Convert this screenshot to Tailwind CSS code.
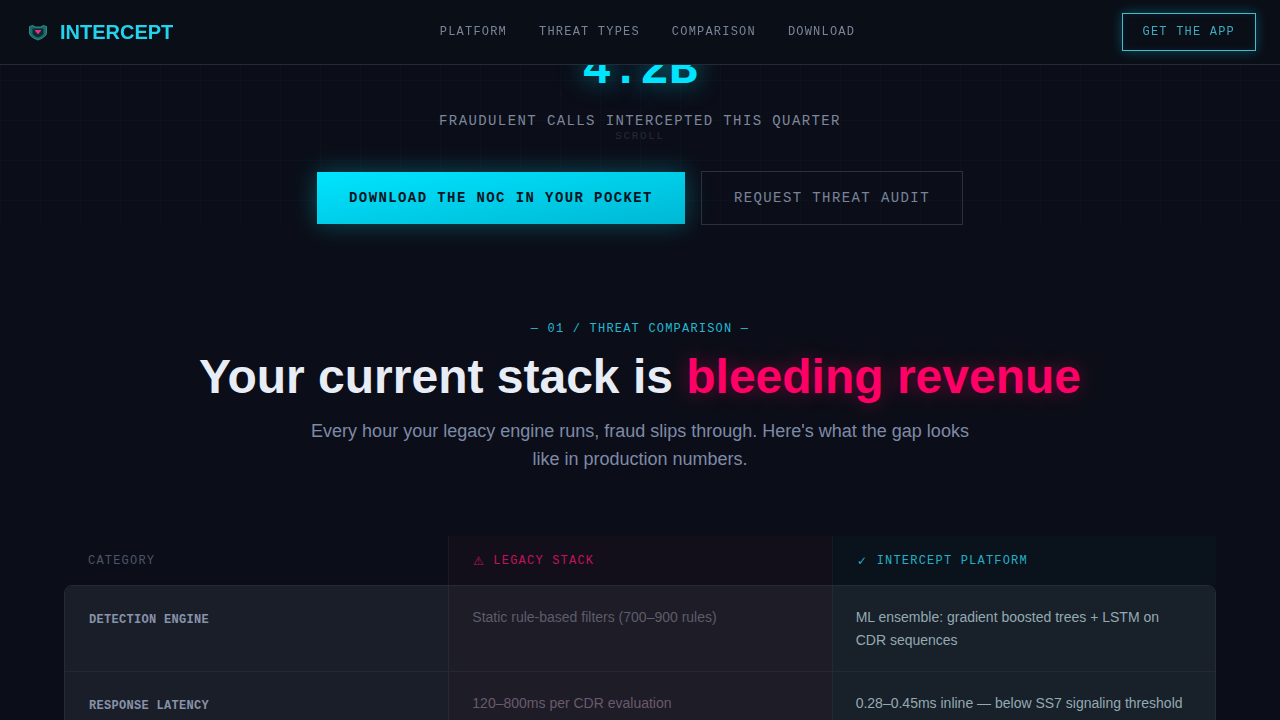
<!DOCTYPE html>
<html lang="en">
<head>
    <meta charset="UTF-8">
    <meta name="viewport" content="width=device-width, initial-scale=1.0">
    <title>Intercept</title>
    <script src="https://cdn.jsdelivr.net/npm/@tailwindcss/browser@4"></script>
</head>
<body class="h-screen overflow-hidden bg-[#0b0e18] text-[#e8edf5] font-['Liberation_Sans',sans-serif]">

    <!-- Nav -->
    <nav class="fixed top-0 inset-x-0 z-10 h-[65px] flex items-center justify-between pl-[28px] pr-[24px] bg-[#0a0e17] border-b border-[#232a3a]">
        <a class="flex items-center gap-[12px]">
            <svg width="20" height="20" viewBox="0 0 20 20" fill="none">
                <path d="M1.500 4.500 L5 3.500 L7 5 H13 L15 3.500 L18.500 4.500 V11 C18.500 14 14 16.500 10 18 C6 16.500 1.500 14 1.500 11 Z" fill="#1d6b68" stroke="#2a8a84" stroke-width="1"/>
                <path d="M4.500 6.500 H15.500 V11 C15.500 13 12.500 14.500 10 15.500 C7.500 14.500 4.500 13 4.500 11 Z" fill="#0c2a2f"/>
                <path d="M6.500 8 H13.500 L10 12.500 Z" fill="#e0338a"/>
            </svg>
            <span class="text-[20px] font-bold leading-[28px] text-[#22d3ee]">INTERCEPT</span>
        </a>
        <div class="flex gap-[32px] font-['Liberation_Mono',monospace] text-[12px] tracking-[1.2px] text-[#7a8499]">
            <a>PLATFORM</a>
            <a>THREAT TYPES</a>
            <a>COMPARISON</a>
            <a>DOWNLOAD</a>
        </div>
        <button class="px-[20px] py-[10px] border border-[#46b8cf] font-['Liberation_Mono',monospace] text-[12px] leading-[16px] tracking-[1.2px] text-[#3fa9c0] shadow-[0_0_12px_rgba(0,229,255,0.3),inset_0_0_8px_rgba(0,229,255,0.08)]">GET THE APP</button>
    </nav>

    <!-- Hero -->
    <section class="relative h-[224px] pt-[46px] flex flex-col items-center font-['Liberation_Mono',monospace]">
        <div class="absolute inset-0 bg-[linear-gradient(rgba(0,229,255,0.02)_1px,transparent_1px),linear-gradient(90deg,rgba(0,229,255,0.02)_1px,transparent_1px)] bg-[size:40px_40px]"></div>
        <div class="relative text-[48px] leading-[48px] font-bold text-[#00e5ff] [text-shadow:0_0_24px_rgba(0,229,255,0.5)]">4.2B</div>
        <div class="relative mt-[17px] text-[14px] leading-[20px] tracking-[1.4px] text-[#7f879c]">FRAUDULENT CALLS INTERCEPTED THIS QUARTER</div>
        <div class="absolute left-0 right-0 top-[129px] text-center text-[11px] leading-[14px] tracking-[1.65px] text-[#262b39]">SCROLL</div>
        <div class="relative mt-[40px] flex items-center gap-[16px] text-[14px] leading-[20px] tracking-[1.4px]">
            <button class="px-[32px] py-[16px] font-bold text-[#0a1422] bg-linear-to-br from-[#00e5ff] to-[#00b8d4] shadow-[0_0_24px_rgba(0,229,255,0.3)]">DOWNLOAD THE NOC IN YOUR POCKET</button>
            <button class="px-[32px] py-[16px] border border-[#2a3142] text-[#7a8499]">REQUEST THREAT AUDIT</button>
        </div>
    </section>

    <!-- Comparison -->
    <section class="px-[64px] pt-[97px]">
        <div class="text-center">
            <div class="font-['Liberation_Mono',monospace] text-[12px] leading-[16px] tracking-[1.2px] text-[#22b8d4]">— 01 / THREAT COMPARISON —</div>
            <h2 class="mt-[11px] text-[48px] leading-[58px] font-bold">Your current stack is <span class="text-[#ff0066] [text-shadow:0_0_20px_rgba(255,0,102,0.4)]">bleeding revenue</span></h2>
            <p class="mt-[11px] mx-auto max-w-[680px] text-[18px] leading-[28px] text-[#7f8aa6]">Every hour your legacy engine runs, fraud slips through. Here's what the gap looks like in production numbers.</p>
        </div>

        <div class="mt-[63px]">
            <div class="grid grid-cols-3 h-[49px] font-['Liberation_Mono',monospace] text-[12px] tracking-[1.2px]">
                <div class="flex items-center px-[24px] text-[#4d5566]">CATEGORY</div>
                <div class="flex items-center px-[24px] bg-[#120f1a] border-l border-[#161b26] text-[#c4125f] whitespace-pre"><span class="font-['DejaVu_Sans',sans-serif]">⚠</span> LEGACY STACK</div>
                <div class="flex items-center px-[24px] bg-[#0a131b] border-l border-[#121b26] text-[#22b0c8] whitespace-pre"><span class="font-['DejaVu_Sans',sans-serif]">✓</span> INTERCEPT PLATFORM</div>
            </div>
            <div class="rounded-lg border border-[#252b39] overflow-hidden text-[14px] leading-[23px]">
                <div class="grid grid-cols-3 border-b border-[#232833]">
                    <div class="px-[24px] pt-[20px] pb-[19px] bg-[#1a1e28]">
                        <div class="mt-[3px] font-['Liberation_Mono',monospace] text-[12px] font-bold tracking-[0.3px] text-[#8892a8]">DETECTION ENGINE</div>
                    </div>
                    <div class="px-[24px] pt-[20px] pb-[19px] bg-[#1e1c26] shadow-[inset_1px_0_0_#232a35] text-[#5d5d6c]">Static rule-based filters (700–900 rules)</div>
                    <div class="px-[24px] pt-[20px] pb-[19px] bg-[#18202a] shadow-[inset_1px_0_0_#212a36] text-[#94aab2]">ML ensemble: gradient boosted trees + LSTM on CDR sequences</div>
                </div>
                <div class="grid grid-cols-3">
                    <div class="px-[24px] pt-[20px] pb-[19px] bg-[#1a1e28]">
                        <div class="mt-[3px] font-['Liberation_Mono',monospace] text-[12px] font-bold tracking-[0.3px] text-[#8892a8]">RESPONSE LATENCY</div>
                    </div>
                    <div class="px-[24px] pt-[20px] pb-[19px] bg-[#1e1c26] shadow-[inset_1px_0_0_#232a35] text-[#6a5a6e]">120–800ms per CDR evaluation</div>
                    <div class="px-[24px] pt-[20px] pb-[19px] bg-[#18202a] shadow-[inset_1px_0_0_#212a36] text-[#94aab2]">0.28–0.45ms inline — below SS7 signaling threshold</div>
                </div>
            </div>
        </div>
    </section>
</body>
</html>
